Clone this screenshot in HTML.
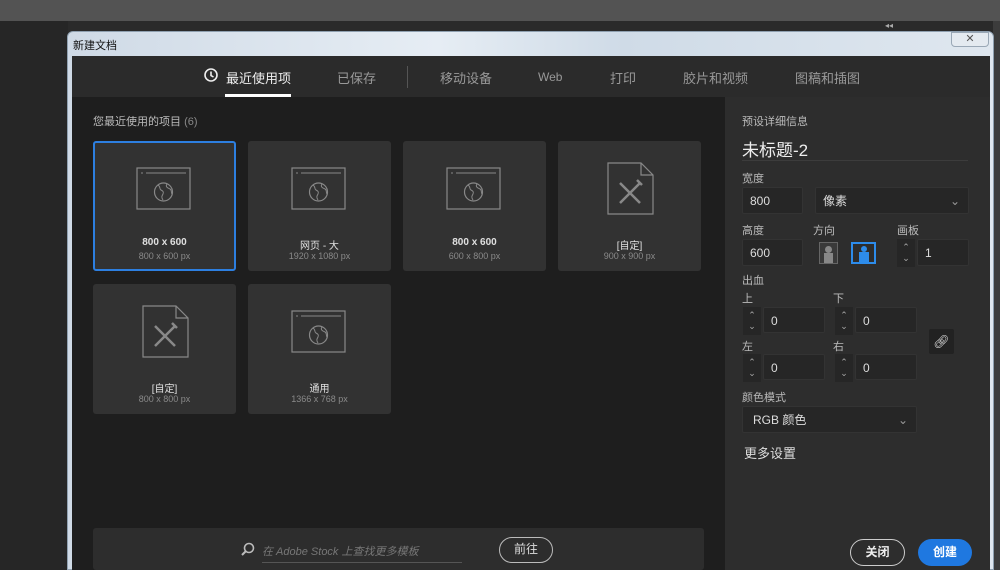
<!DOCTYPE html>
<html><head><meta charset="utf-8"><style>
*{margin:0;padding:0;box-sizing:border-box}
body{width:1000px;height:570px;overflow:hidden;background:#2a2a2a;font-family:"Liberation Sans","Noto Sans CJK SC",sans-serif;position:relative;color:#ccc}
.a{position:absolute}
.card{position:absolute;width:143px;height:130px;background:#323232;border-radius:3px;text-align:center}
.card .t{position:absolute;top:96px;width:100%;font-size:10px;color:#e0e0e0}
.card .s{position:absolute;top:110px;width:100%;font-size:9px;color:#8a8a8a}
.card svg{position:absolute;left:43px;top:26px}
.inp{position:absolute;background:#262626;border:1px solid #333;border-radius:2px;color:#ddd;font-size:12px;padding-left:7px;line-height:26px}
.lab{position:absolute;font-size:11px;color:#bbb}
.spin{position:absolute;width:18px;height:28px;background:#262626;color:#aaa;font-size:9px;text-align:center;line-height:11px;padding-top:3px}
</style></head><body>
<div class="a" style="left:0;top:0;width:1000px;height:21px;background:#535353"></div>
<div class="a" style="left:0;top:21px;width:68px;height:549px;background:#262626"></div>
<div class="a" style="left:993px;top:21px;width:7px;height:549px;background:#3c3c3c"></div>
<div class="a" style="left:885px;top:21px;font-size:8px;color:#aaa">◂◂</div>
<div class="a" style="left:67px;top:31px;width:927px;height:539px;background:linear-gradient(90deg,#cfdae6,#e6edf4 40%,#cfdbe7 60%,#dfe7ef);border-radius:6px 6px 0 0;border:1px solid #8fa0b0"></div>
<div class="a" style="left:73px;top:37px;font-size:11px;color:#111">新建文档</div>
<div class="a" style="left:951px;top:32px;width:38px;height:15px;border:1px solid #9aa8b6;border-radius:0 0 4px 4px;background:#e4eaf0;font-size:11px;color:#555;text-align:center;line-height:13px">✕</div>
<div class="a" style="left:72px;top:56px;width:918px;height:41px;background:#2b2b2b"></div>
<svg class="a" style="left:204px;top:68px" width="14" height="14"><circle cx="7" cy="7" r="6" fill="none" stroke="#eee" stroke-width="1.6"/><path d="M7 3.5V7.5L9.5 9" stroke="#eee" stroke-width="1.6" fill="none"/></svg>
<div class="a" style="left:226px;top:68px;font-size:13px;color:#f0f0f0">最近使用项</div>
<div class="a" style="left:225px;top:94px;width:66px;height:3px;background:#fff"></div>
<div class="a" style="left:337px;top:68px;font-size:13px;color:#999">已保存</div>
<div class="a" style="left:407px;top:66px;width:1px;height:22px;background:#555"></div>
<div class="a" style="left:440px;top:68px;font-size:13px;color:#999">移动设备</div>
<div class="a" style="left:538px;top:70px;font-size:12px;color:#999">Web</div>
<div class="a" style="left:610px;top:68px;font-size:13px;color:#999">打印</div>
<div class="a" style="left:683px;top:68px;font-size:13px;color:#999">胶片和视频</div>
<div class="a" style="left:795px;top:68px;font-size:13px;color:#999">图稿和插图</div>
<div class="a" style="left:72px;top:97px;width:653px;height:473px;background:#1e1e1e"></div>
<div class="a" style="left:93px;top:113px;font-size:11px;color:#bbb">您最近使用的项目 <span style="color:#888">(6)</span></div>
<svg width="0" height="0" style="position:absolute"><defs>
<g id="web"><rect x="1" y="1" width="53" height="41" fill="none" stroke="#888" stroke-width="1.2"/><path d="M5 6h2M10 6h40" stroke="#888"/><circle cx="27.5" cy="25" r="9" fill="none" stroke="#888" stroke-width="1.2"/><path d="M22 18c3 2 1 4 3 5s3 2 2 4-2 3 0 6M31 17c-2 3 1 4 3 5s1 4 2 5" fill="none" stroke="#888"/></g>
<g id="doc"><path d="M1 1h33l12 12v39H1z M34 1v12h12" fill="none" stroke="#888" stroke-width="1.2"/><path d="M13 21l20 20M33 21L13 41M30 18l5 5M16 38l-3 3" stroke="#888" stroke-width="2.5"/></g>
</defs></svg>
<div class="card" style="left:93px;top:141px;border:2px solid #2d7fe0"><svg width="56" height="44" style="left:41px;top:24px"><use href="#web"/></svg><div class="t" style="top:94px;font-weight:bold">800 x 600</div><div class="s" style="top:108px">800 x 600 px</div></div>
<div class="card" style="left:248px;top:141px"><svg width="56" height="44"><use href="#web"/></svg><div class="t">网页 - 大</div><div class="s">1920 x 1080 px</div></div>
<div class="card" style="left:403px;top:141px"><svg width="56" height="44"><use href="#web"/></svg><div class="t" style="font-weight:bold">800 x 600</div><div class="s">600 x 800 px</div></div>
<div class="card" style="left:558px;top:141px"><svg width="48" height="54" style="left:49px;top:21px"><use href="#doc"/></svg><div class="t">[自定]</div><div class="s">900 x 900 px</div></div>
<div class="card" style="left:93px;top:284px"><svg width="48" height="54" style="left:49px;top:21px"><use href="#doc"/></svg><div class="t">[自定]</div><div class="s">800 x 800 px</div></div>
<div class="card" style="left:248px;top:284px"><svg width="56" height="44"><use href="#web"/></svg><div class="t">通用</div><div class="s">1366 x 768 px</div></div>
<div class="a" style="left:93px;top:528px;width:611px;height:42px;background:#2d2d2d;border-radius:3px"></div>
<svg class="a" style="left:240px;top:542px" width="15" height="15"><circle cx="9" cy="6" r="4.5" fill="none" stroke="#bbb" stroke-width="1.6"/><path d="M6 9L2 13" stroke="#bbb" stroke-width="2"/></svg>
<div class="a" style="left:262px;top:543px;font-size:11px;color:#777;font-style:italic">在 Adobe Stock 上查找更多模板</div>
<div class="a" style="left:262px;top:562px;width:200px;height:1px;background:#555"></div>
<div class="a" style="left:499px;top:537px;width:54px;height:26px;border:1.5px solid #bbb;border-radius:13px;font-size:12px;color:#ddd;text-align:center;line-height:23px">前往</div>
<div class="a" style="left:725px;top:97px;width:265px;height:473px;background:#2d2d2d"></div>
<div class="lab" style="left:742px;top:113px">预设详细信息</div>
<div class="a" style="left:742px;top:136px;font-size:17px;color:#eee">未标题-2</div>
<div class="a" style="left:742px;top:160px;width:226px;height:1px;background:#3c3c3c"></div>
<div class="lab" style="left:742px;top:170px">宽度</div>
<div class="inp" style="left:742px;top:187px;width:61px;height:27px">800</div>
<div class="inp" style="left:815px;top:187px;width:154px;height:27px">像素<span style="position:absolute;right:8px;color:#999">⌄</span></div>
<div class="lab" style="left:742px;top:222px">高度</div>
<div class="lab" style="left:813px;top:222px">方向</div>
<div class="lab" style="left:897px;top:222px">画板</div>
<div class="inp" style="left:742px;top:239px;width:61px;height:27px">600</div>
<div class="a" style="left:819px;top:242px;width:19px;height:22px;border:1px solid #666;background:#3a3a3a"><div style="position:absolute;left:5px;top:3px;width:7px;height:7px;border-radius:50%;background:#888"></div><div style="position:absolute;left:4px;top:10px;width:9px;height:10px;background:#888"></div></div>
<div class="a" style="left:851px;top:242px;width:25px;height:22px;border:2px solid #2d8ceb"><div style="position:absolute;left:8px;top:2px;width:6px;height:6px;border-radius:50%;background:#2d8ceb"></div><div style="position:absolute;left:6px;top:8px;width:10px;height:10px;background:#2d8ceb"></div></div>
<div class="spin" style="left:897px;top:239px">⌃<br>⌄</div>
<div class="inp" style="left:917px;top:239px;width:52px;height:27px">1</div>
<div class="lab" style="left:742px;top:272px">出血</div>
<div class="lab" style="left:742px;top:290px">上</div>
<div class="lab" style="left:833px;top:290px">下</div>
<div class="spin" style="left:743px;top:307px">⌃<br>⌄</div>
<div class="inp" style="left:763px;top:307px;width:62px;height:26px">0</div>
<div class="spin" style="left:835px;top:307px">⌃<br>⌄</div>
<div class="inp" style="left:855px;top:307px;width:62px;height:26px">0</div>
<div class="a" style="left:929px;top:329px;width:25px;height:25px;background:#222;border-radius:2px;color:#ddd;font-size:13px;text-align:center;line-height:25px">🔗︎</div>
<div class="lab" style="left:742px;top:338px">左</div>
<div class="lab" style="left:833px;top:338px">右</div>
<div class="spin" style="left:743px;top:354px">⌃<br>⌄</div>
<div class="inp" style="left:763px;top:354px;width:62px;height:26px">0</div>
<div class="spin" style="left:835px;top:354px">⌃<br>⌄</div>
<div class="inp" style="left:855px;top:354px;width:62px;height:26px">0</div>
<div class="lab" style="left:742px;top:389px">颜色模式</div>
<div class="inp" style="left:742px;top:406px;width:175px;height:27px;padding-left:10px">RGB 颜色<span style="position:absolute;right:8px;color:#999">⌄</span></div>
<div class="a" style="left:744px;top:443px;font-size:13px;color:#ddd">更多设置</div>
<div class="a" style="left:850px;top:539px;width:55px;height:27px;border:1.5px solid #ccc;border-radius:14px;font-size:12px;font-weight:bold;color:#eee;text-align:center;line-height:24px">关闭</div>
<div class="a" style="left:918px;top:539px;width:54px;height:27px;background:#1f78e0;border-radius:14px;font-size:12px;font-weight:bold;color:#fff;text-align:center;line-height:27px">创建</div>
</body></html>
